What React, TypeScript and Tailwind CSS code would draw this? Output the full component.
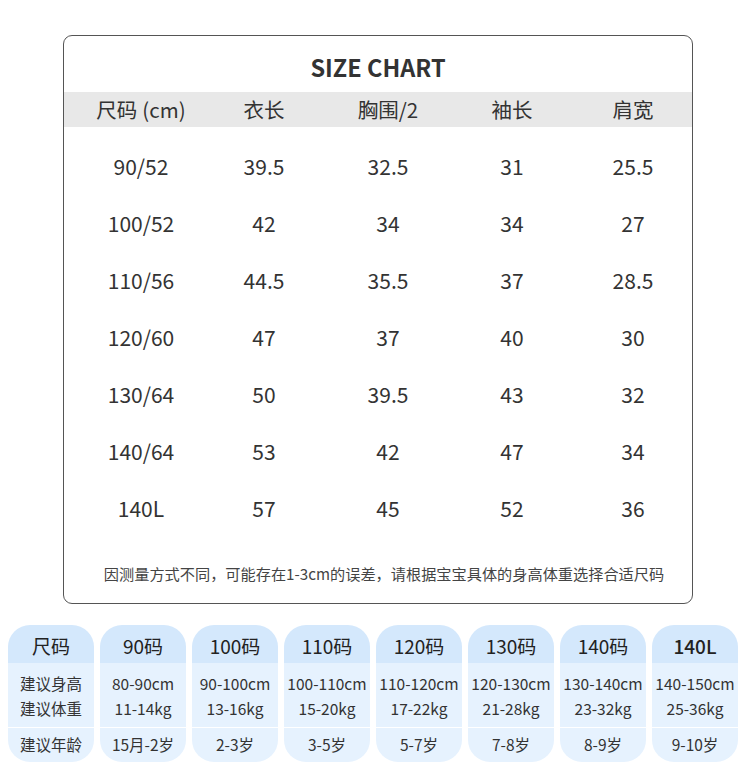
import React from "react";

const rows = [
  ["90/52", "39.5", "32.5", "31", "25.5"],
  ["100/52", "42", "34", "34", "27"],
  ["110/56", "44.5", "35.5", "37", "28.5"],
  ["120/60", "47", "37", "40", "30"],
  ["130/64", "50", "39.5", "43", "32"],
  ["140/64", "53", "42", "47", "34"],
  ["140L", "57", "45", "52", "36"],
];

const cards = [
  ["90码", "80-90cm", "11-14kg", "15月-2岁"],
  ["100码", "90-100cm", "13-16kg", "2-3岁"],
  ["110码", "100-110cm", "15-20kg", "3-5岁"],
  ["120码", "110-120cm", "17-22kg", "5-7岁"],
  ["130码", "120-130cm", "21-28kg", "7-8岁"],
  ["140码", "130-140cm", "23-32kg", "8-9岁"],
  ["140L", "140-150cm", "25-36kg", "9-10岁"],
];

const font = { fontFamily: '"Noto Sans CJK SC", "Noto Sans", sans-serif' };

function Card({ head, a, b, c, bold }: { head: string; a: string; b: string; c: string; bold?: boolean }) {
  return (
    <div className="w-[86px] h-[137px] rounded-[22px] overflow-hidden flex flex-col shrink-0">
      <div className={`h-[38px] bg-[#d4e8fc] flex items-center justify-center text-[19px] text-[#222] pt-[4px] ${bold ? "font-medium" : ""}`}>
        {head}
      </div>
      <div className="h-[64px] bg-[#e6f2fe] flex flex-col items-center justify-center text-[15.5px] leading-[25px] text-[#333] pt-[2px] whitespace-nowrap">
        <div>{a}</div>
        <div>{b}</div>
      </div>
      <div className="h-[1px] bg-white" />
      <div className="flex-1 bg-[#e6f2fe] flex items-center justify-center text-[15.5px] text-[#333] whitespace-nowrap">
        {c}
      </div>
    </div>
  );
}

export default function App() {
  return (
    <div className="w-[750px] h-[775px] bg-white pt-[35px]" style={font}>
      <div className="ml-[63px] w-[630px] h-[569px] border border-[#555] rounded-[9px] overflow-hidden">
        <div className="h-[56px] pt-[7px] flex items-center justify-center text-[23.5px] font-bold text-[#333]">
          SIZE CHART
        </div>
        <div className="h-[35px] bg-[#e8e8e8] grid grid-cols-[122px_124px_124px_124px_1fr] pl-[16px] items-center text-[20.5px] text-[#333]">
          <div className="text-center">
            尺码<span className="ml-[5px]">(cm)</span>
          </div>
          <div className="text-center">衣长</div>
          <div className="text-center">胸围/2</div>
          <div className="text-center">袖长</div>
          <div className="text-center">肩宽</div>
        </div>
        <div className="pt-[11px]">
          {rows.map((r, i) => (
            <div key={i} className="h-[57px] grid grid-cols-[122px_124px_124px_124px_1fr] pl-[16px] items-center text-[21px] text-[#333]">
              {r.map((v, j) => (
                <div key={j} className="text-center">
                  {v}
                </div>
              ))}
            </div>
          ))}
        </div>
        <div className="mt-[26px] pl-[12px] leading-[20px] text-center text-[15.2px] text-[#444]">
          因测量方式不同，可能存在1-3cm的误差，请根据宝宝具体的身高体重选择合适尺码
        </div>
      </div>
      <div className="mt-[21px] pl-[8px] flex gap-[6px]">
        <Card head="尺码" a="建议身高" b="建议体重" c="建议年龄" />
        {cards.map((c, i) => (
          <Card key={i} head={c[0]} a={c[1]} b={c[2]} c={c[3]} bold={c[0] === "140L"} />
        ))}
      </div>
    </div>
  );
}
